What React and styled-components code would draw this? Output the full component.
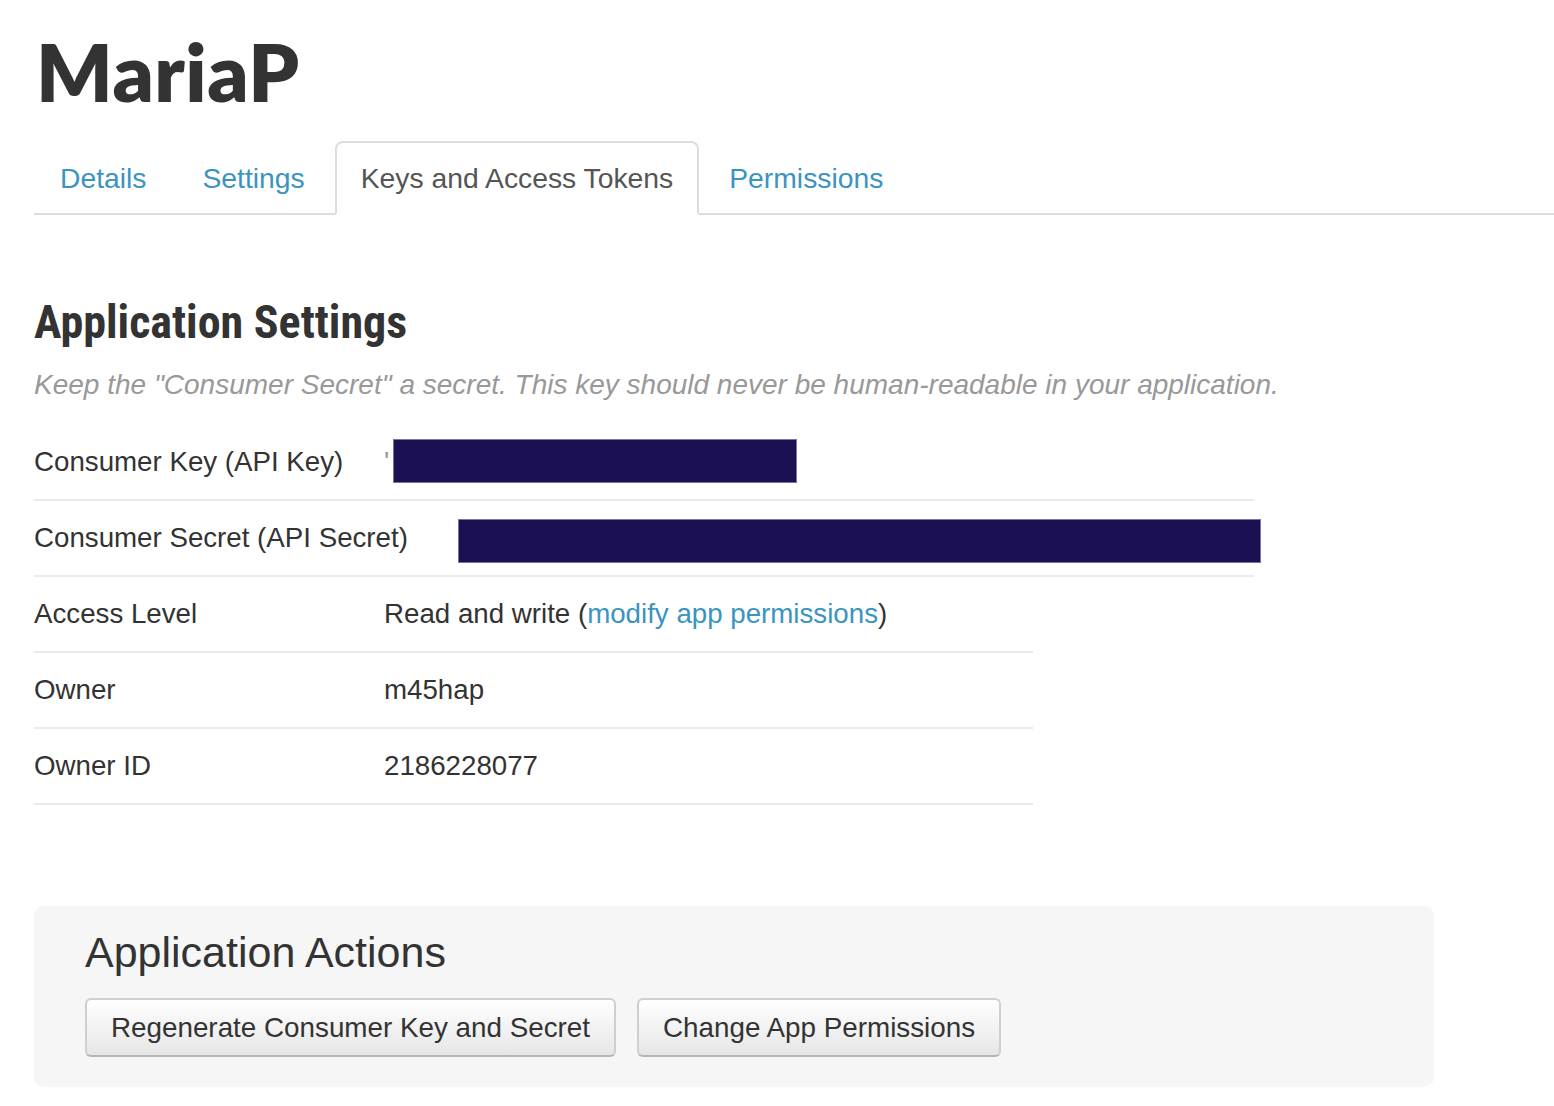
import React from "react";
import styled, { createGlobalStyle } from "styled-components";

const Global = createGlobalStyle`
  html, body { margin: 0; padding: 0; background: #fff; }
  body { font-family: "Liberation Sans", Arial, sans-serif; color: #333; }
  * { box-sizing: border-box; }
`;

const Page = styled.div`
  padding: 21px 0 40px 34px;
`;

const Title = styled.h1`
  margin: 0;
  font-family: Lato, "Open Sans", sans-serif;
  font-weight: 800;
  font-size: 80px;
  line-height: 100px;
  color: #333;
  padding-left: 2px;
  letter-spacing: 0.5px;
`;

const Tabs = styled.ul`
  list-style: none;
  margin: 20px 0 0;
  padding: 0;
  display: flex;
  border-bottom: 2px solid #ddd;
`;

const Tab = styled.li`
  margin: 0 4px -2px 0;
  height: 74px;
  padding: 0 24px;
  border: 2px solid ${(p) => (p.$active ? "#ddd" : "transparent")};
  border-bottom-color: ${(p) => (p.$active ? "#fff" : "transparent")};
  border-radius: 8px 8px 0 0;
  background: ${(p) => (p.$active ? "#fff" : "transparent")};
  font-size: 28.3px;
  line-height: 70px;
  color: ${(p) => (p.$active ? "#555" : "#3b94c0")};
  white-space: nowrap;
`;

const SectionTitle = styled.h2`
  margin: 82px 0 0;
  font-family: "Liberation Sans Narrow", "Roboto Condensed", Roboto, sans-serif;
  font-weight: 700;
  font-size: 46px;
  line-height: 50px;
  color: #333;
`;

const Note = styled.p`
  margin: 18px 0 0;
  font-style: italic;
  font-size: 28px;
  line-height: 40px;
  color: #999;
  white-space: nowrap;
`;

const Table = styled.div`
  width: ${(p) => p.$width}px;
  margin-top: ${(p) => p.$top || 0}px;
`;

const Row = styled.div`
  display: flex;
  align-items: center;
  height: 76px;
  border-bottom: 2px solid #eaeaea;
  font-size: 27.7px;
`;

const Label = styled.div`
  width: 350px;
  flex: none;
  white-space: nowrap;
`;

const Value = styled.div`
  display: flex;
  align-items: center;
  white-space: nowrap;
`;

const Tick = styled.span`
  color: #999;
`;

const Redacted = styled.span`
  display: inline-block;
  flex: none;
  width: ${(p) => p.$w}px;
  height: 44px;
  margin-left: ${(p) => p.$left}px;
  margin-top: ${(p) => p.$dy || 0}px;
  background: #1b1052;
  border: 1px solid #7b73a8;
`;

const Link = styled.a`
  color: #3b94c0;
  text-decoration: none;
`;

const Actions = styled.section`
  margin-top: 101px;
  width: 1400px;
  background: #f6f6f6;
  border-radius: 10px;
  padding: 21px 50px 30px 51px;
`;

const ActionsTitle = styled.h3`
  margin: 0;
  font-weight: 400;
  font-size: 43px;
  line-height: 50px;
  color: #333;
`;

const ButtonRow = styled.div`
  display: flex;
  gap: 21px;
  margin-top: 21px;
`;

const Button = styled.button`
  height: 59px;
  padding: 0 24px;
  font-family: "Liberation Sans", Arial, sans-serif;
  font-size: 27.8px;
  color: #333;
  background: linear-gradient(#ffffff, #e6e6e6);
  border: 2px solid #cfcfcf;
  border-bottom-color: #b5b5b5;
  border-radius: 6px;
  box-shadow: inset 0 2px 0 rgba(255, 255, 255, 0.6);
  cursor: pointer;
`;

export default function App() {
  return (
    <>
      <Global />
      <Page>
        <Title>MariaP</Title>
        <Tabs>
          <Tab>Details</Tab>
          <Tab>Settings</Tab>
          <Tab $active>Keys and Access Tokens</Tab>
          <Tab>Permissions</Tab>
        </Tabs>

        <SectionTitle>Application Settings</SectionTitle>
        <Note>
          Keep the "Consumer Secret" a secret. This key should never be human-readable in your application.
        </Note>

        <Table $width={1220} $top={20}>
          <Row>
            <Label>Consumer Key (API Key)</Label>
            <Value>
              <Tick>'</Tick>
              <Redacted $w={404} $left={4} $dy={-2} />
            </Value>
          </Row>
          <Row>
            <Label>Consumer Secret (API Secret)</Label>
            <Value>
              <Redacted $w={803} $left={74} $dy={6} />
            </Value>
          </Row>
        </Table>

        <Table $width={999}>
          <Row>
            <Label>Access Level</Label>
            <Value>
              Read and write (<Link href="#">modify app permissions</Link>)
            </Value>
          </Row>
          <Row>
            <Label>Owner</Label>
            <Value>m45hap</Value>
          </Row>
          <Row>
            <Label>Owner ID</Label>
            <Value>2186228077</Value>
          </Row>
        </Table>

        <Actions>
          <ActionsTitle>Application Actions</ActionsTitle>
          <ButtonRow>
            <Button>Regenerate Consumer Key and Secret</Button>
            <Button>Change App Permissions</Button>
          </ButtonRow>
        </Actions>
      </Page>
    </>
  );
}
